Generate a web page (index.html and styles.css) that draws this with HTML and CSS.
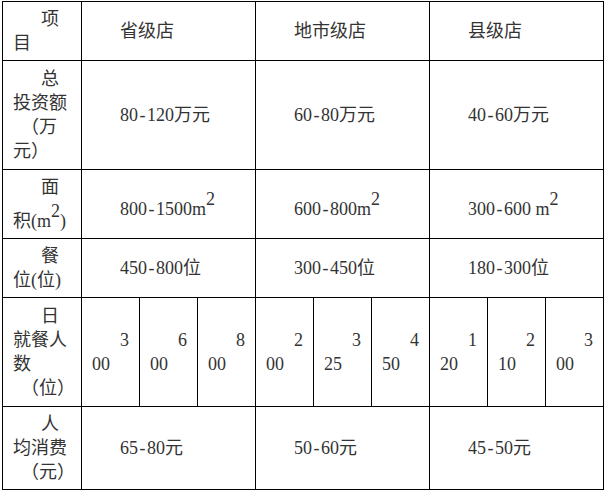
FILE: index.html
```html
<!DOCTYPE html>
<html lang="zh-CN">
<head>
<meta charset="utf-8">
<title>门店规模对比</title>
<link rel="stylesheet" href="styles.css">
</head>
<body>
<div class="sheet">
  <div class="cell head"><p>项<br>目</p></div>
  <div class="cell span3"><p>省级店</p></div>
  <div class="cell span3"><p>地市级店</p></div>
  <div class="cell span3"><p>县级店</p></div>

  <div class="cell head"><p>总<br>投资额<br><span class="gap"></span>（万<br>元）</p></div>
  <div class="cell span3"><p>80<span class="dash">-</span>120万元</p></div>
  <div class="cell span3"><p>60<span class="dash">-</span>80万元</p></div>
  <div class="cell span3"><p>40<span class="dash">-</span>60万元</p></div>

  <div class="cell head"><p>面<br>积(m<sup>2</sup>)</p></div>
  <div class="cell span3"><p>800<span class="dash">-</span>1500m<sup>2</sup></p></div>
  <div class="cell span3"><p>600<span class="dash">-</span>800m<sup>2</sup></p></div>
  <div class="cell span3"><p>300<span class="dash">-</span>600 m<sup>2</sup></p></div>

  <div class="cell head"><p>餐<br>位(位)</p></div>
  <div class="cell span3"><p>450<span class="dash">-</span>800位</p></div>
  <div class="cell span3"><p>300<span class="dash">-</span>450位</p></div>
  <div class="cell span3"><p>180<span class="dash">-</span>300位</p></div>

  <div class="cell head"><p>日<br>就餐人<br>数<br><span class="gap"></span>（位）</p></div>
  <div class="cell"><p>3<br>00</p></div>
  <div class="cell"><p>6<br>00</p></div>
  <div class="cell"><p>8<br>00</p></div>
  <div class="cell"><p>2<br>00</p></div>
  <div class="cell"><p>3<br>25</p></div>
  <div class="cell"><p>4<br>50</p></div>
  <div class="cell"><p>1<br>20</p></div>
  <div class="cell"><p>2<br>10</p></div>
  <div class="cell"><p>3<br>00</p></div>

  <div class="cell head"><p>人<br>均消费<br><span class="gap"></span>（元）</p></div>
  <div class="cell span3"><p>65<span class="dash">-</span>80元</p></div>
  <div class="cell span3"><p>50<span class="dash">-</span>60元</p></div>
  <div class="cell span3"><p>45<span class="dash">-</span>50元</p></div>
</div>
</body>
</html>
```

FILE: styles.css
```css
html, body {
  margin: 0;
  padding: 0;
  background: #ffffff;
}

body {
  font-family: "Liberation Serif", "Noto Sans CJK SC", serif;
  font-size: 18px;
  line-height: 24px;
  color: #333333;
}

.sheet {
  display: grid;
  grid-template-columns: 78px repeat(9, 57px);
  grid-template-rows: 58px 108px 68px 58px 108px 82px;
  gap: 1px;
  padding: 1px;
  background: #000000;
  width: max-content;
  margin: 1px 0 0 2px;
}

.cell {
  background: #ffffff;
  display: flex;
  flex-direction: column;
  justify-content: center;
  padding: 0 8px 0 10px;
  min-width: 0;
}

.cell p {
  margin: 0;
  text-indent: 28px;
  white-space: nowrap;
}

.span3 {
  grid-column: span 3;
}

.gap {
  display: inline-block;
  width: 8px;
}

.dash {
  display: inline-block;
  width: 9px;
  text-indent: 0;
  text-align: center;
}

sup {
  font-size: 18px;
  line-height: 24px;
  vertical-align: 10px;
}
```
